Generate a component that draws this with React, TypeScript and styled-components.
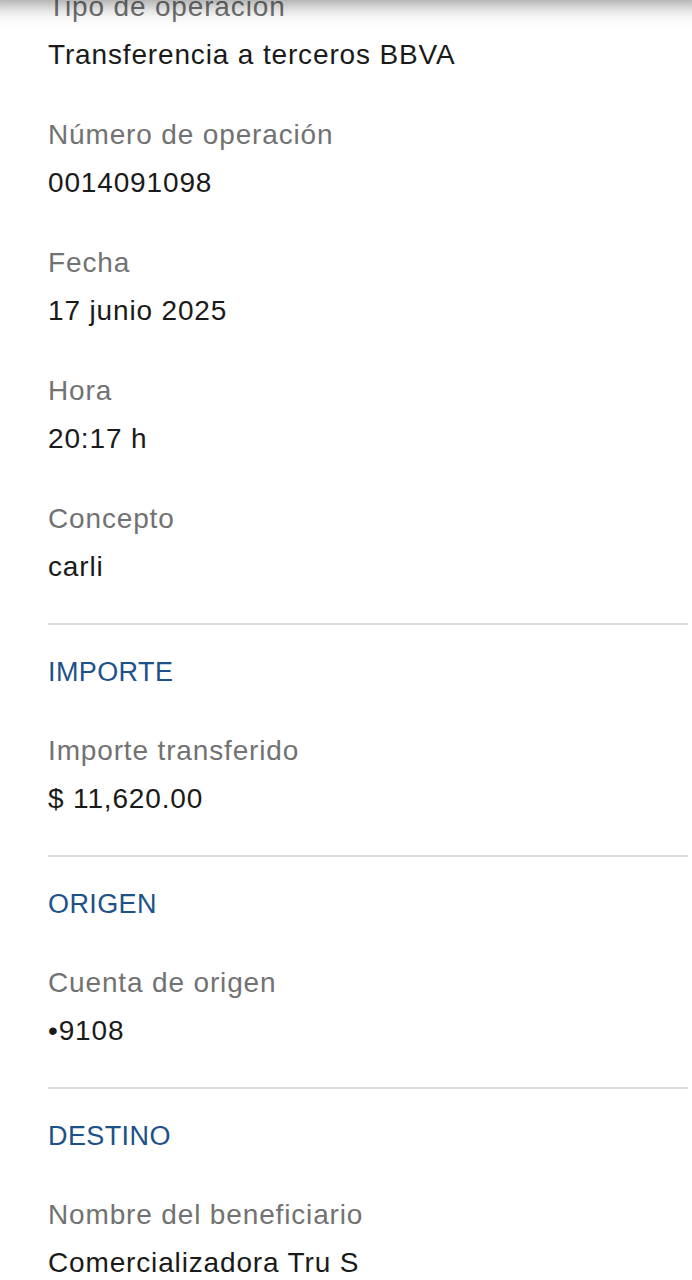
import React from "react";
import styled, { createGlobalStyle } from "styled-components";

const Global = createGlobalStyle`
  html, body { margin: 0; padding: 0; background: #ffffff; }
  body { font-family: "Liberation Sans", Arial, Helvetica, sans-serif; overflow: hidden; }
`;

const Page = styled.div`
  position: relative;
  width: 692px;
  height: 1280px;
  overflow: hidden;
  background: #ffffff;
`;

const TopBarShadow = styled.div`
  position: absolute;
  left: -20px;
  right: -20px;
  top: -60px;
  height: 60px;
  background: #ffffff;
  box-shadow: 0 2px 22px rgba(0, 0, 0, 0.5);
  z-index: 2;
`;

const Content = styled.div`
  display: flex;
  flex-direction: column;
  margin-top: -10px;
  padding: 0 4px 0 48px;
`;

const Section = styled.section<{ $first?: boolean }>`
  display: flex;
  flex-direction: column;
  padding-top: ${(p) => (p.$first ? "0" : "30px")};
  padding-bottom: 39px;
  border-bottom: 2px solid #dcdcdc;
`;

const SectionTitle = styled.h2`
  margin: 0 0 45px 0;
  font-size: 27px;
  line-height: 34px;
  font-weight: 400;
  letter-spacing: 0.4px;
  color: #1d5189;
`;

const FieldList = styled.div`
  display: flex;
  flex-direction: column;
  gap: 46px;
`;

const Field = styled.div`
  display: flex;
  flex-direction: column;
  gap: 14px;
`;

const Label = styled.span`
  font-size: 28px;
  line-height: 34px;
  letter-spacing: 0.85px;
  color: #727272;
`;

const Value = styled.span`
  font-size: 28px;
  line-height: 34px;
  letter-spacing: 0.85px;
  color: #1a1a1a;
`;

type Item = { label: string; value: string };
type Group = { title?: string; items: Item[] };

const groups: Group[] = [
  {
    items: [
      { label: "Tipo de operación", value: "Transferencia a terceros BBVA" },
      { label: "Número de operación", value: "0014091098" },
      { label: "Fecha", value: "17 junio 2025" },
      { label: "Hora", value: "20:17 h" },
      { label: "Concepto", value: "carli" },
    ],
  },
  {
    title: "IMPORTE",
    items: [{ label: "Importe transferido", value: "$ 11,620.00" }],
  },
  {
    title: "ORIGEN",
    items: [{ label: "Cuenta de origen", value: "•9108" }],
  },
  {
    title: "DESTINO",
    items: [{ label: "Nombre del beneficiario", value: "Comercializadora Tru S" }],
  },
];

export default function App() {
  return (
    <Page>
      <Global />
      <TopBarShadow />
      <Content>
        {groups.map((g, i) => (
          <Section key={i} $first={!g.title}>
            {g.title && <SectionTitle>{g.title}</SectionTitle>}
            <FieldList>
              {g.items.map((it) => (
                <Field key={it.label}>
                  <Label>{it.label}</Label>
                  <Value>{it.value}</Value>
                </Field>
              ))}
            </FieldList>
          </Section>
        ))}
      </Content>
    </Page>
  );
}
